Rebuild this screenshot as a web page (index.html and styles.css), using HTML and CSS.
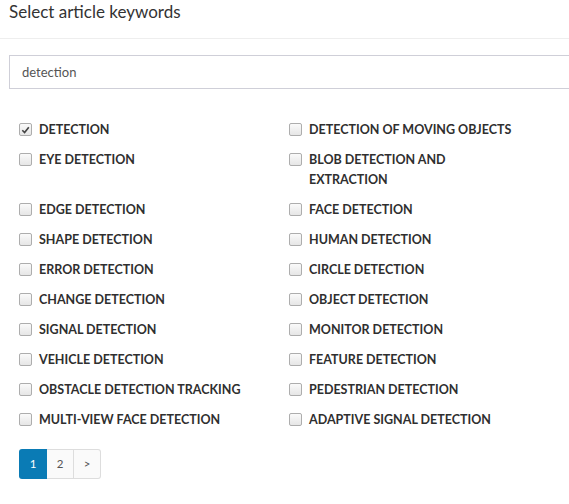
FILE: index.html
```html
<!DOCTYPE html>
<html>
<head>
<meta charset="utf-8">
<link rel="stylesheet" href="styles.css">
</head>
<body>
<div class="modal">
  <div class="header">Select article keywords</div>
  <div class="body">
    <div class="search">detection</div>
    <div class="grid">
      <label class="item"><span class="box checked"><svg viewBox="0 0 12 12" width="12" height="12"><path d="M2.5 6.3 L5 8.8 L9.6 3" fill="none" stroke="#444" stroke-width="1.8"/></svg></span><span class="text">DETECTION</span></label>
      <label class="item"><span class="box"></span><span class="text">DETECTION OF MOVING OBJECTS</span></label>
      <label class="item"><span class="box"></span><span class="text">EYE DETECTION</span></label>
      <label class="item"><span class="box"></span><span class="text">BLOB DETECTION AND<br>EXTRACTION</span></label>
      <label class="item"><span class="box"></span><span class="text">EDGE DETECTION</span></label>
      <label class="item"><span class="box"></span><span class="text">FACE DETECTION</span></label>
      <label class="item"><span class="box"></span><span class="text">SHAPE DETECTION</span></label>
      <label class="item"><span class="box"></span><span class="text">HUMAN DETECTION</span></label>
      <label class="item"><span class="box"></span><span class="text">ERROR DETECTION</span></label>
      <label class="item"><span class="box"></span><span class="text">CIRCLE DETECTION</span></label>
      <label class="item"><span class="box"></span><span class="text">CHANGE DETECTION</span></label>
      <label class="item"><span class="box"></span><span class="text">OBJECT DETECTION</span></label>
      <label class="item"><span class="box"></span><span class="text">SIGNAL DETECTION</span></label>
      <label class="item"><span class="box"></span><span class="text">MONITOR DETECTION</span></label>
      <label class="item"><span class="box"></span><span class="text">VEHICLE DETECTION</span></label>
      <label class="item"><span class="box"></span><span class="text">FEATURE DETECTION</span></label>
      <label class="item"><span class="box"></span><span class="text">OBSTACLE DETECTION TRACKING</span></label>
      <label class="item"><span class="box"></span><span class="text">PEDESTRIAN DETECTION</span></label>
      <label class="item"><span class="box"></span><span class="text">MULTI-VIEW FACE DETECTION</span></label>
      <label class="item"><span class="box"></span><span class="text">ADAPTIVE SIGNAL DETECTION</span></label>
    </div>
    <div class="pager">
      <span class="page active">1</span><span class="page">2</span><span class="page">&gt;</span>
    </div>
  </div>
</div>
</body>
</html>
```
FILE: styles.css
```css
html, body {
  margin: 0;
  padding: 0;
  background: #fff;
  overflow: hidden;
}
body {
  font-family: "Lato", "Open Sans", sans-serif;
  color: #333;
}
.modal {
  width: 100%;
}
.header {
  height: 38px;
  padding: 0 9px;
  font-size: 17px;
  line-height: 24px;
  color: #333;
  border-bottom: 1px solid #eee;
}
.body {
  padding: 16px 0 0 9px;
}
.search {
  height: 32px;
  border: 1px solid #cfcfd8;
  border-right: none;
  padding: 0 12px;
  font-size: 13px;
  line-height: 32px;
  color: #555;
}
.grid {
  display: grid;
  grid-template-columns: 270px 270px;
  row-gap: 10px;
  padding: 31px 10px 0 10px;
}
.item {
  display: flex;
  align-items: flex-start;
  gap: 7px;
  font-size: 12.5px;
  font-weight: 700;
  line-height: 20px;
  color: #2f2f2f;
}
.box {
  flex: none;
  width: 11px;
  height: 11px;
  margin-top: 3px;
  border: 1px solid #adadad;
  border-radius: 2px;
  background: linear-gradient(#fafafa, #e6e6e6);
  display: flex;
  align-items: center;
  justify-content: center;
}
.box svg { display: block; }
.pager {
  display: flex;
  margin: 19px 0 0 10px;
}
.page {
  width: 26px;
  height: 28px;
  line-height: 28px;
  text-align: center;
  font-size: 11.5px;
  color: #555;
  background: #fafafa;
  border: 1px solid #ddd;
  border-left: none;
}
.page:last-child { border-radius: 0 3px 3px 0; }
.page.active {
  width: 28px;
  height: 30px;
  line-height: 30px;
  border: none;
  background: #0a7bb5;
  color: #fff;
  border-radius: 3px 0 0 3px;
}
```
